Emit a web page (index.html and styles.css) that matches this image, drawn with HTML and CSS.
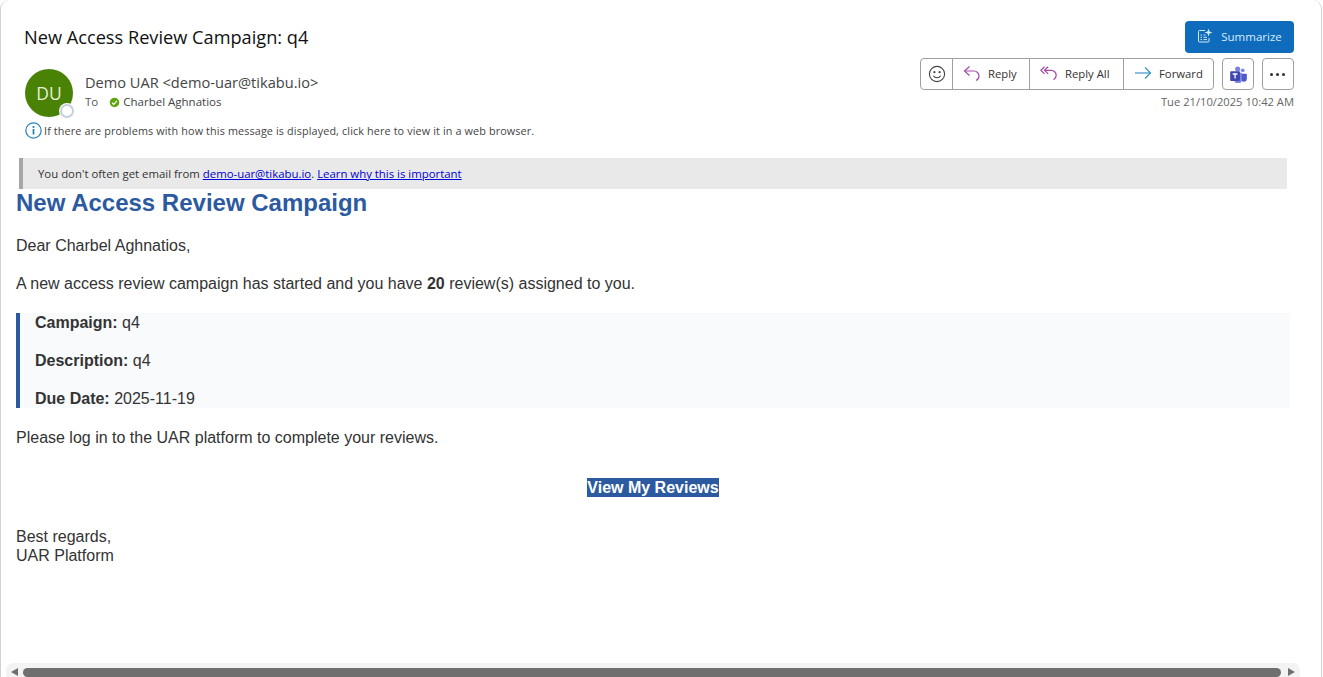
FILE: index.html
```html
<!DOCTYPE html>
<html lang="en">
<head>
<meta charset="utf-8">
<title>New Access Review Campaign: q4</title>
<link rel="stylesheet" href="styles.css">
</head>
<body>
<div class="window">
  <header class="header">
    <div class="header-left">
      <h1 class="subject">New Access Review Campaign: q4</h1>
      <div class="sender-row">
        <div class="avatar">DU<span class="presence"></span></div>
        <div class="sender-info">
          <div class="sender">Demo UAR &lt;demo-uar@tikabu.io&gt;</div>
          <div class="recipients">
            <span class="to">To</span>
            <svg class="check" viewBox="0 0 12 12"><circle cx="6" cy="6" r="5.2" fill="#5ea40c"/><path d="M3.4 6.2l1.8 1.8 3.4-3.6" fill="none" stroke="#fff" stroke-width="1.4"/></svg>
            <span>Charbel Aghnatios</span>
          </div>
        </div>
      </div>
      <div class="info-line">
        <svg class="info-icon" viewBox="0 0 16 16"><circle cx="8" cy="8" r="7.2" fill="none" stroke="#2b88b8" stroke-width="1.2"/><circle cx="8" cy="4.7" r="1" fill="#1f7fb0"/><rect x="7.2" y="6.6" width="1.6" height="5.2" fill="#1f7fb0"/></svg>
        <span>If there are problems with how this message is displayed, click here to view it in a web browser.</span>
      </div>
    </div>
    <div class="header-right">
      <button class="summarize">
        <svg class="sum-icon" viewBox="0 0 16 16" fill="none" stroke="#d5e8f7" stroke-width="1"><path d="M8 2.500H2.500a1 1 0 0 0-1 1v9.500a1 1 0 0 0 1 1H11a1 1 0 0 0 1-1V10"/><path d="M3.500 7h1.500M6.500 7h2M3.500 9.300h1.500M6.500 9.300h3.500M3.500 11.600h1.500M6.500 11.600h3.500"/><path d="M11.500 .5l1 3 3 1-3 1-1 3-1-3-3-1 3-1z" fill="#d5e8f7" stroke="none"/></svg>
        <span>Summarize</span>
      </button>
      <div class="actions">
        <div class="action-group">
          <div class="action emoji">
            <svg class="emoji-icon" viewBox="0 0 18 18" fill="none" stroke="#444" stroke-width="1.1"><circle cx="9" cy="9" r="7.6"/><circle cx="6.4" cy="7.2" r="1.1" fill="#444" stroke="none"/><circle cx="11.6" cy="7.2" r="1.1" fill="#444" stroke="none"/><path d="M5.4 10.8c1.8 2.6 5.4 2.6 7.2 0"/></svg>
          </div>
          <div class="action reply">
            <svg class="act-icon" viewBox="0 0 18 18" fill="none" stroke="#a44bab" stroke-width="1.2"><path d="M6.5 2.5L1.5 7l5 4.5"/><path d="M1.5 7H11a5 5 0 0 1 5 5c0 2-1 3.6-3 4.5"/></svg>
            <span>Reply</span>
          </div>
          <div class="action replyall">
            <svg class="act-icon" viewBox="0 0 20 18" fill="none" stroke="#a44bab" stroke-width="1.4"><path d="M5 2L1 6l4 4"/><path d="M9 2L5 6l4 4"/><path d="M5 6h7.500a5.500 5.500 0 0 1 5.500 5.500c0 2-1 3.800-3 5"/></svg>
            <span>Reply All</span>
          </div>
          <div class="action forward">
            <svg class="act-icon" viewBox="0 0 18 18" fill="none" stroke="#2a8dc0" stroke-width="1.1"><path d="M1 9h15.500"/><path d="M11 3.500L16.500 9 11 14.500"/></svg>
            <span>Forward</span>
          </div>
        </div>
        <div class="icon-btn">
          <svg class="teams" viewBox="0 0 20 20"><circle cx="15" cy="5" r="2.200" fill="#7b83eb"/><path d="M12 9h6.800a1 1 0 0 1 1 1v5a3.500 3.500 0 0 1-7 0z" fill="#5059c9"/><circle cx="9" cy="3.500" r="3" fill="#7b83eb"/><path d="M5 8h9v8a4.500 4.500 0 0 1-9 0z" fill="#7b83eb"/><rect x="0.200" y="6.200" width="11.500" height="11.500" rx="1.200" fill="#3f47ad"/><path d="M3.200 9.400h5.600M6 9.400v5.400" stroke="#fff" stroke-width="1.500" fill="none"/></svg>
        </div>
        <div class="icon-btn">
          <span class="dots"><i></i><i></i><i></i></span>
        </div>
      </div>
      <div class="timestamp">Tue 21/10/2025 10:42 AM</div>
    </div>
  </header>

  <div class="banner">You don't often get email from <a href="#">demo-uar@tikabu.io</a>. <a href="#">Learn why this is important</a></div>

  <main class="message">
    <h2 class="title">New Access Review Campaign</h2>
    <p>Dear Charbel Aghnatios,</p>
    <p>A new access review campaign has started and you have <strong>20</strong> review(s) assigned to you.</p>
    <div class="details">
      <p><strong>Campaign:</strong> q4</p>
      <p><strong>Description:</strong> q4</p>
      <p><strong>Due Date:</strong> 2025-11-19</p>
    </div>
    <p>Please log in to the UAR platform to complete your reviews.</p>
    <p class="cta"><a class="cta-link" href="#">View My Reviews</a></p>
    <p class="signoff">Best regards,<br>UAR Platform</p>
  </main>

  <div class="scrollbar">
    <span class="arrow left"></span>
    <div class="thumb"></div>
    <span class="arrow right"></span>
  </div>
</div>
</body>
</html>
```
FILE: styles.css
```css
* { box-sizing: border-box; }
html, body { margin: 0; padding: 0; height: 677px; overflow: hidden; background: #fff; }
body { font-family: "Open Sans", "Noto Sans", sans-serif; color: #323130; }

.window {
  height: 677px;
  width: 1322px;
  display: flex;
  flex-direction: column;
  background: #fff;
  border-left: 1px solid #d2d2d2;
  border-right: 1px solid #d2d2d2;
  border-top-left-radius: 9px;
  border-top-right-radius: 9px;
  overflow: hidden;
}

.header {
  display: flex;
  justify-content: space-between;
  height: 158px;
  padding: 21px 27px 0 23px;
  flex: none;
}
.subject {
  margin: 3px 0 0;
  font-size: 18.200px;
  font-weight: 400;
  line-height: 26px;
  color: #111;
}
.sender-row { display: flex; margin-top: 19px; padding-left: 1px; }
.avatar {
  position: relative;
  width: 48px;
  height: 48px;
  border-radius: 50%;
  background: #498205;
  color: #e6efd8;
  font-size: 17.500px;
  line-height: 48px;
  text-align: center;
  flex: none;
}
.presence {
  position: absolute;
  right: -1px;
  bottom: -1px;
  width: 14px;
  height: 14px;
  border-radius: 50%;
  background: #fff;
  border: 2px solid #c4d0dd;
  box-shadow: 0 0 0 1px #fff;
}
.sender-info { margin-left: 12px; }
.sender { font-size: 14.600px; line-height: 20px; margin-top: 3px; color: #444; }
.recipients { display: flex; align-items: center; font-size: 11.500px; line-height: 18px; margin-top: 1px; color: #444; }
.to { margin-right: 11px; color: #555; }
.check { width: 11px; height: 11px; margin-right: 3px; }
.info-line { display: flex; align-items: center; margin-top: 5px; padding-left: 1px; font-size: 10.800px; line-height: 16px; letter-spacing: 0.13px; color: #444; }
.info-icon { width: 17px; height: 17px; margin-right: 2px; flex: none; }

.header-right { display: flex; flex-direction: column; align-items: flex-end; }
.summarize {
  display: flex;
  align-items: center;
  justify-content: center;
  width: 109px;
  height: 32px;
  border: none;
  border-radius: 4px;
  background: #0f6cbd;
  color: #d9ebfa;
  font-family: inherit;
  font-size: 11.500px;
  padding: 0 0 2px;
}
.sum-icon { width: 16px; height: 16px; margin-right: 8px; }
.actions { display: flex; margin-top: 5px; }
.action-group {
  display: flex;
  height: 32px;
  width: 294px;
  border: 1px solid #a0a0a0;
  border-radius: 4px;
  background: #fff;
}
.action {
  display: flex;
  align-items: center;
  padding-bottom: 2px;
  font-size: 11.300px;
  color: #323130;
  border-left: 1px solid #a0a0a0;
}
.action:first-child { border-left: none; }
.emoji { width: 31px; justify-content: center; padding-bottom: 0; }
.reply { width: 77px; padding-left: 10px; }
.replyall { width: 94px; padding-left: 10px; }
.forward { flex: 1; padding-left: 10px; }
.emoji-icon { width: 18px; height: 18px; }
.act-icon { width: 18px; height: 18px; margin-right: 7px; }
.icon-btn {
  display: flex;
  align-items: center;
  justify-content: center;
  width: 32px;
  height: 32px;
  margin-left: 8px;
  border: 1px solid #a0a0a0;
  border-radius: 4px;
}
.teams { width: 17px; height: 17px; }
.dots { display: flex; gap: 3px; padding-right: 1px; }
.dots i { display: block; width: 3px; height: 3px; border-radius: 50%; background: #333; }
.timestamp { margin-top: 3px; font-size: 11.200px; line-height: 18px; color: #666; }

.banner {
  flex: none;
  width: 1268px;
  height: 31px;
  margin-left: 18px;
  padding-left: 15px;
  border-left: 4px solid #a6a6a6;
  background: #e9e9e9;
  font-size: 11.380px;
  line-height: 31px;
  color: #333;
}
.banner a { color: #0000d8; }

.message {
  flex: 1;
  min-height: 0;
  padding: 0 31px 0 15px;
  font-family: "Liberation Sans", Arial, sans-serif;
  font-size: 16px;
  line-height: 18px;
  color: #333;
}
.title {
  margin: 0 0 20px;
  font-size: 24px;
  line-height: 28px;
  font-weight: 700;
  color: #2c5aa0;
}
.message p { margin: 0 0 20px; }
.details {
  margin: 0 0 21px;
  padding: 1px 0 0 15px;
  border-left: 4px solid #2c5aa0;
  background: #f9fafb;
}
.details p:last-child { margin-bottom: 0; }
.message p.cta { text-align: center; margin: 32px 0 30px; }
.cta-link {
  background: #2c5aa0;
  color: #fff;
  font-weight: 700;
  text-decoration: none;
  padding: 1px 0;
}
.message p.signoff { line-height: 19px; margin: 0; }

.scrollbar {
  flex: none;
  display: flex;
  align-items: center;
  height: 14px;
  margin: 0 21px 0 5px;
  padding: 4px 5px 0;
  background: #f3f3f3;
  border-radius: 7px 7px 0 0;
}
.thumb { flex: 1; height: 9px; margin: 0 7px 0 5px; background: #6f6f6f; border-radius: 5px; }
.arrow { width: 0; height: 0; border-top: 4.500px solid transparent; border-bottom: 4.500px solid transparent; }
.arrow.left { border-right: 7px solid #6f6f6f; }
.arrow.right { border-left: 7px solid #6f6f6f; }
```
